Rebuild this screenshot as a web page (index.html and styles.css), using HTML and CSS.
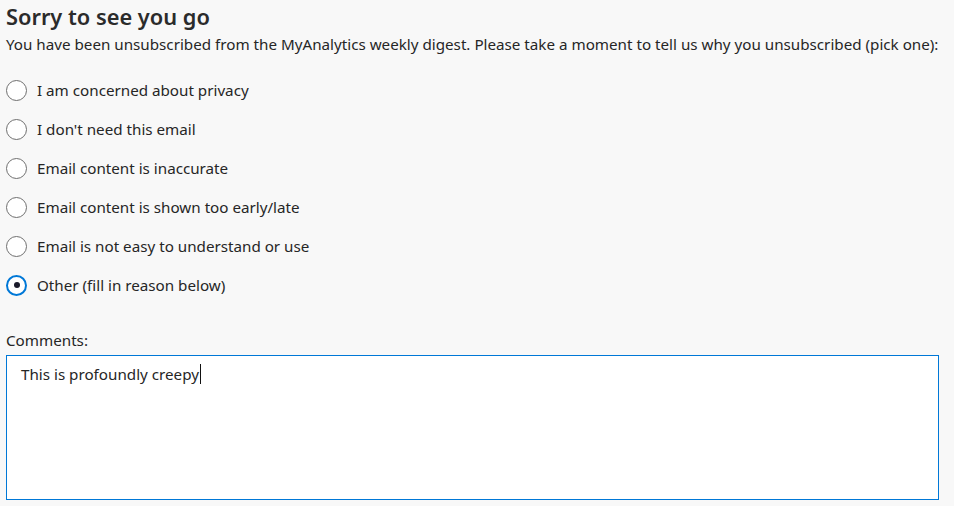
FILE: index.html
```html
<!DOCTYPE html>
<html>
<head>
<meta charset="utf-8">
<link rel="stylesheet" href="styles.css">
</head>
<body>
<div class="page">
  <h1 class="title">Sorry to see you go</h1>
  <p class="intro">You have been unsubscribed from the MyAnalytics weekly digest. Please take a moment to tell us why you unsubscribed (pick one):</p>
  <div class="options">
    <label class="option"><span class="radio"></span><span class="label">I am concerned about privacy</span></label>
    <label class="option"><span class="radio"></span><span class="label">I don't need this email</span></label>
    <label class="option"><span class="radio"></span><span class="label">Email content is inaccurate</span></label>
    <label class="option"><span class="radio"></span><span class="label">Email content is shown too early/late</span></label>
    <label class="option"><span class="radio"></span><span class="label">Email is not easy to understand or use</span></label>
    <label class="option"><span class="radio checked"></span><span class="label">Other (fill in reason below)</span></label>
  </div>
  <div class="comments-label">Comments:</div>
  <div class="textarea"><span>This is profoundly creepy</span><span class="caret"></span></div>
</div>
</body>
</html>
```
FILE: styles.css
```css
html, body {
  margin: 0;
  padding: 0;
  background: #f8f8f8;
}
body {
  font-family: "Noto Sans", "Open Sans", sans-serif;
  color: #262626;
  font-size: 15.2px;
}
.page {
  padding: 2px 15px 0 6px;
  display: flex;
  flex-direction: column;
}
.title {
  margin: 0;
  font-size: 21.8px;
  font-weight: 600;
  line-height: 30px;
  color: #2b2b2b;
}
.intro {
  margin: 1px 0 0;
  line-height: 22px;
  white-space: nowrap;
}
.options {
  display: flex;
  flex-direction: column;
  gap: 17px;
  margin-top: 24px;
}
.option {
  display: flex;
  align-items: center;
  gap: 10px;
  height: 22px;
}
.radio {
  box-sizing: border-box;
  width: 21px;
  height: 21px;
  border: 1px solid #6f6f6f;
  border-radius: 50%;
  background: #fff;
  display: flex;
  align-items: center;
  justify-content: center;
}
.radio.checked {
  border: 2px solid #0078d7;
}
.radio.checked::after {
  content: "";
  width: 6px;
  height: 6px;
  border-radius: 50%;
  background: #1a1a2a;
}
.label {
  line-height: 22px;
}
.comments-label {
  margin-top: 34px;
  line-height: 20px;
}
.textarea {
  margin-top: 5px;
  box-sizing: border-box;
  height: 145px;
  border: 1.5px solid #0078d7;
  background: #fff;
  padding: 8px 14px;
  line-height: 20px;
  display: flex;
  align-items: flex-start;
}
.caret {
  display: inline-block;
  width: 1px;
  height: 20px;
  background: #111;
  margin-left: 1px;
}
```
